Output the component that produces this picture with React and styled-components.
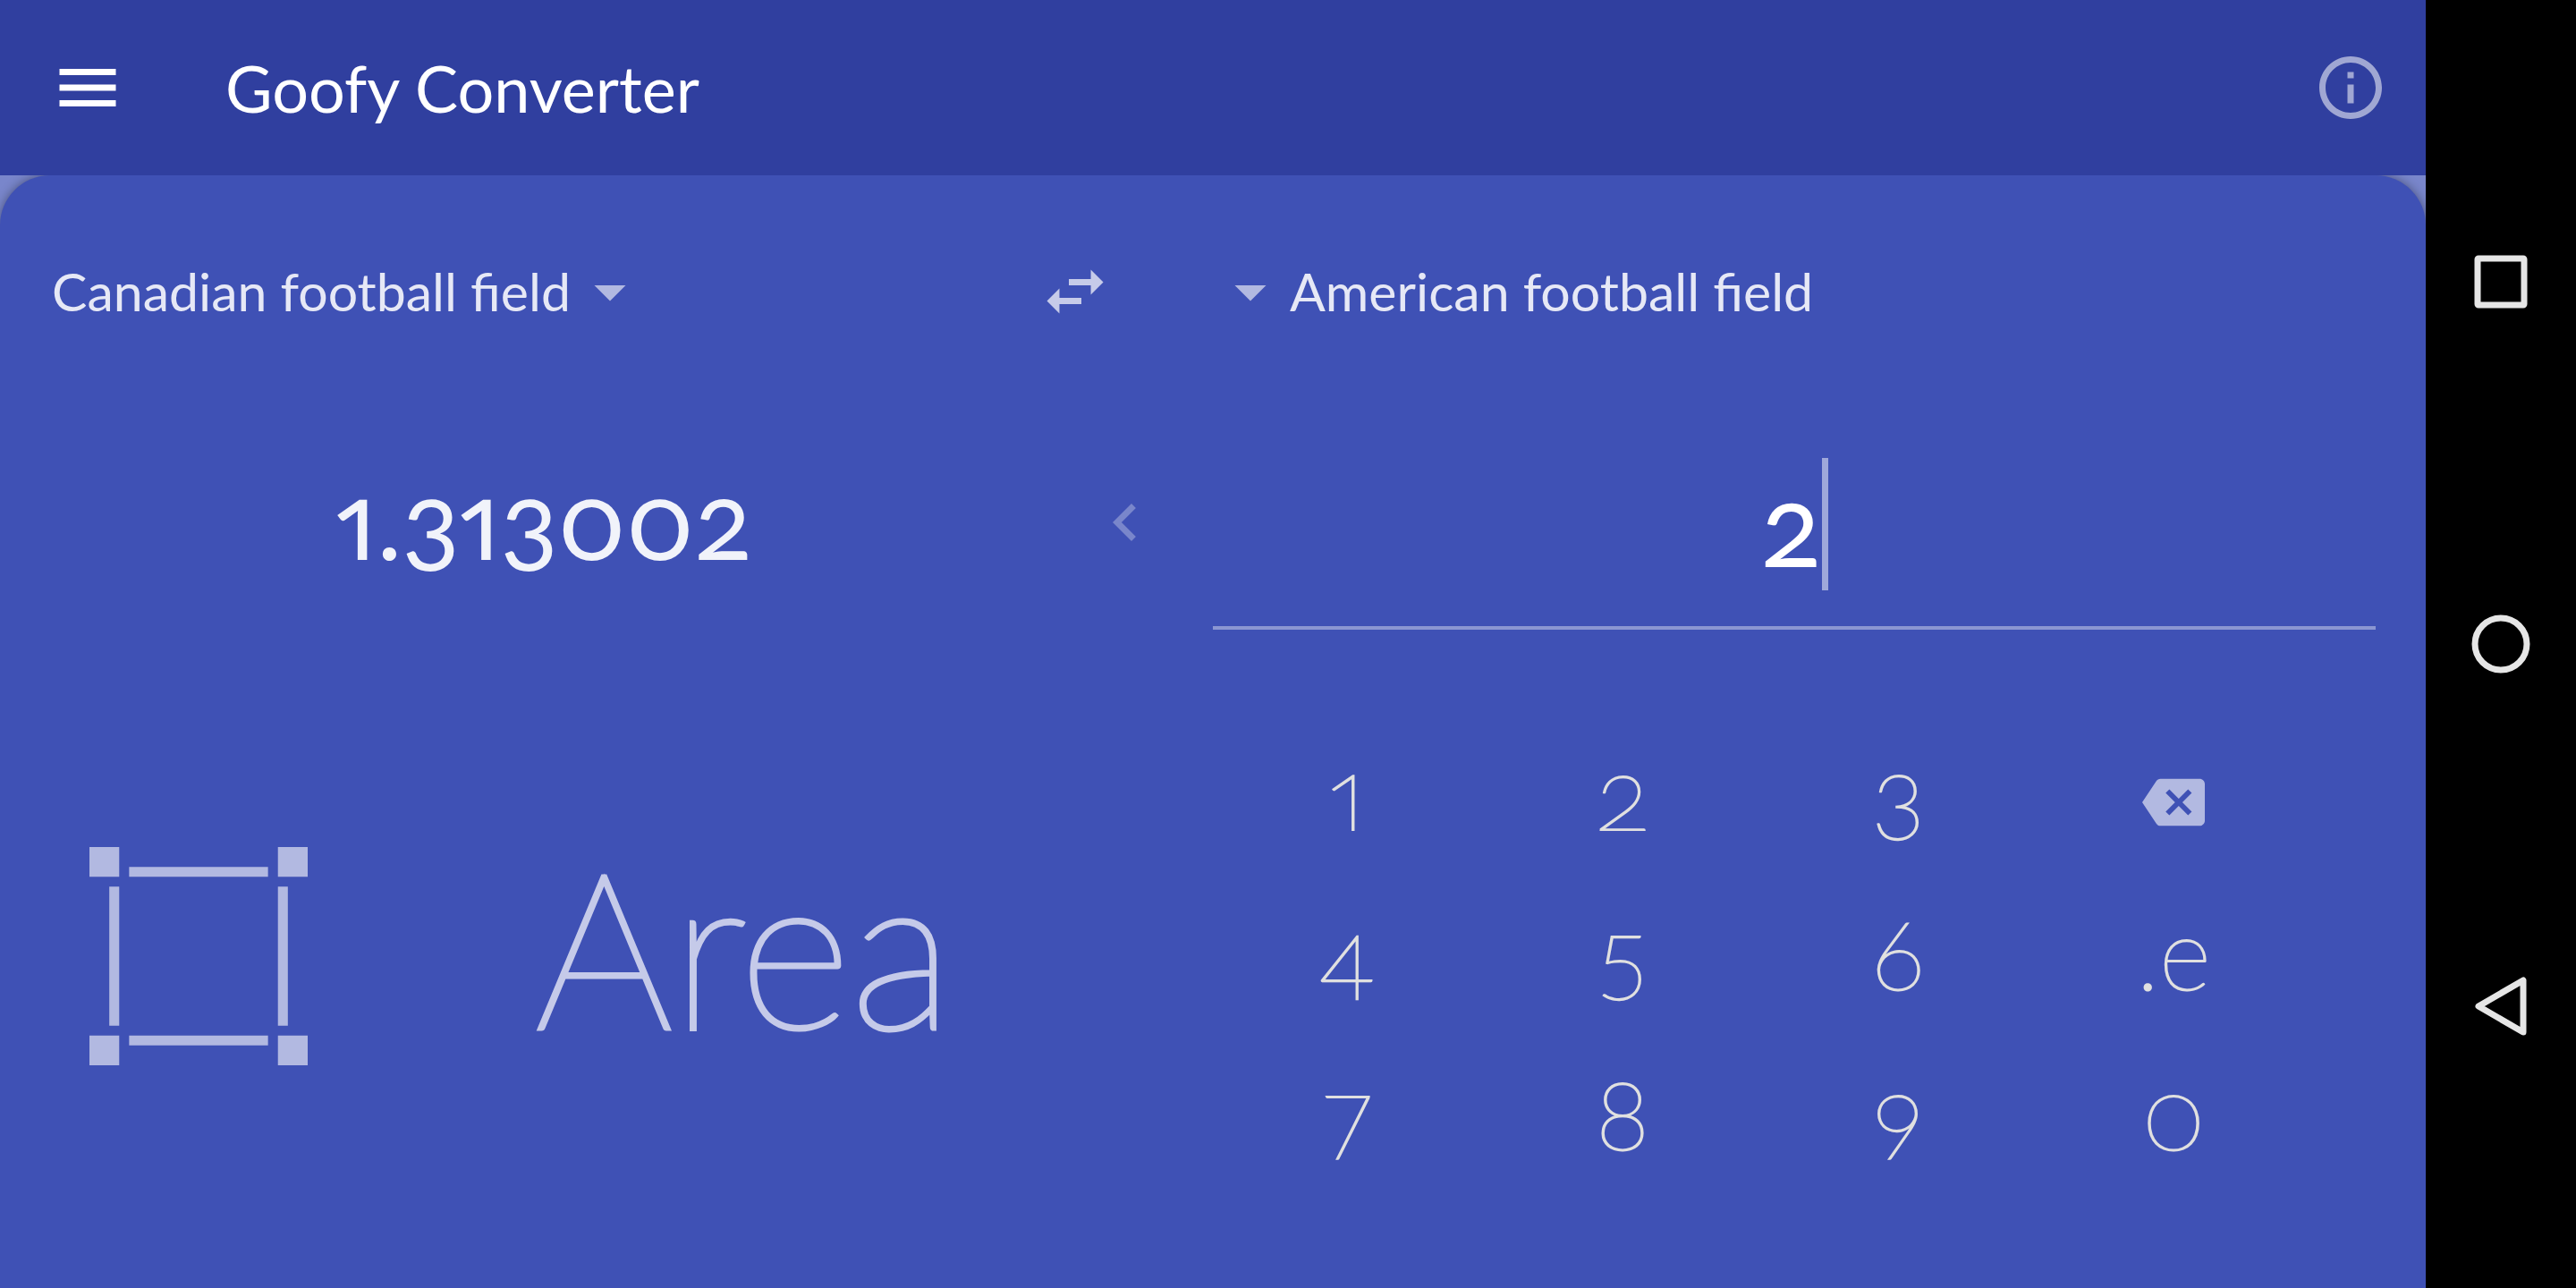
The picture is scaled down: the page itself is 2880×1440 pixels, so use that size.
import React, { useState } from "react";
import styled, { createGlobalStyle } from "styled-components";

const GlobalStyle = createGlobalStyle`
  *, *::before, *::after { box-sizing: border-box; }
  body {
    margin: 0;
    background: #000;
    font-family: Lato, "Open Sans", sans-serif;
    font-variant-numeric: oldstyle-nums proportional-nums;
  }
  button, select, input { font: inherit; font-variant-numeric: inherit; color: inherit; }
`;

const Screen = styled.div`
  display: flex;
  min-height: 100vh;
`;

const AppFrame = styled.div`
  flex: 1;
  min-width: 0;
  display: flex;
  flex-direction: column;
  background: #7986cb;
  overflow: hidden;
`;

const Toolbar = styled.header`
  position: relative;
  z-index: 1;
  display: flex;
  align-items: center;
  height: 196px;
  padding: 0 42px 0 56px;
  background: #303f9f;
  color: #fff;
`;

const Title = styled.h1`
  flex: 1;
  margin: 0 0 0 112px;
  font-size: 72px;
  font-weight: 400;
  line-height: 84px;
`;

const IconButton = styled.button`
  display: flex;
  padding: 0;
  border: 0;
  background: none;
  opacity: ${(p) => p.$opacity || 1};
`;

const Icon = styled.svg`
  display: block;
  flex: none;
  width: ${(p) => p.$size || 84}px;
  height: ${(p) => p.$size || 84}px;
  fill: currentColor;
`;

const Panel = styled.main`
  flex: 1;
  display: grid;
  grid-template-columns: minmax(0, 1300fr) minmax(0, 1412fr);
  grid-template-rows: 180px 240px 1fr;
  padding-top: 88px;
  border-radius: 56px 56px 0 0;
  background: #3f51b5;
  box-shadow: 0 0 12px rgba(0, 0, 0, 0.4);
  color: #fff;
`;

const UnitCell = styled.div`
  display: flex;
  align-items: center;
  padding: 0 56px 96px;
`;

const UnitSelect = styled.select`
  appearance: none;
  margin: 0;
  padding: 0 2px;
  border: 0;
  background: none;
  font-size: 59px;
  line-height: 84px;
  height: 84px;
  color: rgba(255, 255, 255, 0.87);
`;

const Caret = styled(Icon)`
  opacity: 0.6;
  pointer-events: none;
`;

const Spacer = styled.div`
  flex: 1;
`;

const ValueCell = styled.div`
  display: flex;
  align-items: center;
`;

const Result = styled.output`
  flex: 1;
  padding-bottom: 8px;
  text-align: center;
  font-size: 120px;
  line-height: 148px;
  color: rgba(255, 255, 255, 0.93);
`;

const Direction = styled(Icon)`
  opacity: 0.3;
`;

const EntryField = styled.label`
  display: flex;
  align-items: center;
  justify-content: center;
  margin: 0 56px;
  padding-top: 8px;
  border-bottom: 4px solid rgba(255, 255, 255, 0.4);
`;

const Entry = styled.input`
  field-sizing: content;
  padding: 0;
  border: 0;
  outline: 0;
  background: none;
  font-size: 126px;
  line-height: 148px;
  height: 148px;
  caret-color: transparent;
`;

const Cursor = styled.span`
  width: 7px;
  height: 148px;
  background: rgba(255, 255, 255, 0.5);
`;

const Category = styled.section`
  display: grid;
  grid-template-columns: minmax(0, 4fr) minmax(0, 7fr);
  align-items: center;
  justify-items: center;
  padding: 0 80px 6px 0;
`;

const CategoryIcon = styled(Icon)`
  opacity: 0.6;
`;

const CategoryName = styled.h2`
  margin: 0;
  padding-bottom: 24px;
  font-size: 242px;
  font-weight: 100;
  line-height: 280px;
  color: #c5cae9;
  -webkit-text-stroke: 5px #c5cae9;
`;

const Keypad = styled.section`
  display: grid;
  grid-template-columns: repeat(4, minmax(0, 1fr));
  grid-template-rows: repeat(3, 179px);
  align-content: center;
  padding: 8px 128px 0 52px;
`;

const Key = styled.button`
  display: flex;
  align-items: center;
  justify-content: center;
  padding: 0 0 ${(p) => (p.$glyph ? 0 : 24)}px;
  border: 0;
  background: none;
  font-size: 112px;
  font-weight: 100;
  line-height: 136px;
  color: #e0e0e0;
  -webkit-text-stroke: 2px #e0e0e0;
`;

const Backspace = styled(Icon)`
  color: #fff;
  opacity: 0.6;
`;

const SystemBar = styled.nav`
  display: flex;
  flex-direction: column;
  width: 168px;
  padding: 112px 0;
  background: #000;
`;

const SystemButton = styled.button`
  flex: 1;
  display: flex;
  align-items: center;
  justify-content: center;
  padding: 0;
  border: 0;
  background: none;
`;

const Outline = styled.svg`
  width: 84px;
  height: 84px;
  fill: none;
  stroke: #e6e6e6;
  stroke-width: 7;
  stroke-linejoin: round;
`;

const KEYS = ["1", "2", "3", "back", "4", "5", "6", ".e", "7", "8", "9", "0"];

function DropDown() {
  return (
    <Caret viewBox="0 0 24 24" aria-hidden="true">
      <path d="M7 10l5 5 5-5z" />
    </Caret>
  );
}

export default function App() {
  const [entry, setEntry] = useState("2");
  const result = Number(((Number(entry) || 0) * 0.656501).toFixed(6));

  const press = (key) =>
    setEntry((v) => (key === "back" ? v.slice(0, -1) : v + (key === ".e" ? "." : key)));

  return (
    <>
      <GlobalStyle />
      <Screen>
        <AppFrame>
          <Toolbar>
            <IconButton aria-label="Menu">
              <Icon viewBox="0 0 24 24">
                <path d="M3 18h18v-2H3v2zm0-5h18v-2H3v2zm0-7v2h18V6H3z" />
              </Icon>
            </IconButton>
            <Title>Goofy Converter</Title>
            <IconButton aria-label="About" $opacity={0.54}>
              <Icon viewBox="0 0 24 24">
                <path d="M11 17h2v-6h-2v6zm1-15C6.48 2 2 6.48 2 12s4.480 10 10 10 10-4.480 10-10S17.520 2 12 2zm0 18c-4.410 0-8-3.590-8-8s3.590-8 8-8 8 3.590 8 8-3.590 8-8 8zM11 9h2V7h-2v2z" />
              </Icon>
            </IconButton>
          </Toolbar>
          <Panel>
            <UnitCell>
              <UnitSelect aria-label="Result unit">
                <option>Canadian football field</option>
              </UnitSelect>
              <DropDown />
              <Spacer />
              <IconButton aria-label="Swap units" $opacity={0.7}>
                <Icon viewBox="0 0 24 24">
                  <path d="M6.990 11L3 15l3.990 4v-3H14v-2H6.990v-3zM21 9l-3.990-4v3H10v2h7.010v3L21 9z" />
                </Icon>
              </IconButton>
            </UnitCell>
            <UnitCell>
              <DropDown />
              <UnitSelect aria-label="Entry unit">
                <option>American football field</option>
              </UnitSelect>
            </UnitCell>
            <ValueCell>
              <Result>{result}</Result>
              <Direction viewBox="0 0 24 24" aria-hidden="true">
                <path d="M15.410 7.410L14 6l-6 6 6 6 1.410-1.410L10.830 12z" />
              </Direction>
            </ValueCell>
            <EntryField>
              <Entry
                aria-label="Value"
                value={entry}
                onChange={(e) => setEntry(e.target.value)}
              />
              <Cursor />
            </EntryField>
            <Category>
              <CategoryIcon $size={244} viewBox="0 0 22 22" aria-hidden="true">
                <path d="M0 0h3v3H0zM19 0h3v3h-3zM0 19h3v3H0zM19 19h3v3h-3zM4 2h14v1H4zM4 19h14v1H4zM2 4h1v14H2zM19 4h1v14h-1z" />
              </CategoryIcon>
              <CategoryName>Area</CategoryName>
            </Category>
            <Keypad aria-label="Keypad">
              {KEYS.map((key) =>
                key === "back" ? (
                  <Key key={key} $glyph aria-label="Backspace" onClick={() => press(key)}>
                    <Backspace $size={70} viewBox="0 0 24 24">
                      <path d="M22 3H7c-.69 0-1.230.350-1.590.880L0 12l5.410 8.110c.360.530.900.890 1.590.890h15c1.100 0 2-.900 2-2V5c0-1.100-.900-2-2-2zm-3 12.590L17.590 17 14 13.410 10.410 17 9 15.590 12.590 12 9 8.410 10.410 7 14 10.590 17.590 7 19 8.410 15.410 12 19 15.590z" />
                    </Backspace>
                  </Key>
                ) : (
                  <Key key={key} onClick={() => press(key)}>
                    {key}
                  </Key>
                )
              )}
            </Keypad>
          </Panel>
        </AppFrame>
        <SystemBar aria-label="System">
          <SystemButton aria-label="Recent apps">
            <Outline viewBox="0 0 84 84">
              <rect x="16" y="16" width="52" height="52" rx="1" />
            </Outline>
          </SystemButton>
          <SystemButton aria-label="Home">
            <Outline viewBox="0 0 84 84">
              <circle cx="42" cy="42" r="29" />
            </Outline>
          </SystemButton>
          <SystemButton aria-label="Back">
            <Outline viewBox="0 0 84 84">
              <path d="M67 13v58L17 42z" />
            </Outline>
          </SystemButton>
        </SystemBar>
      </Screen>
    </>
  );
}
